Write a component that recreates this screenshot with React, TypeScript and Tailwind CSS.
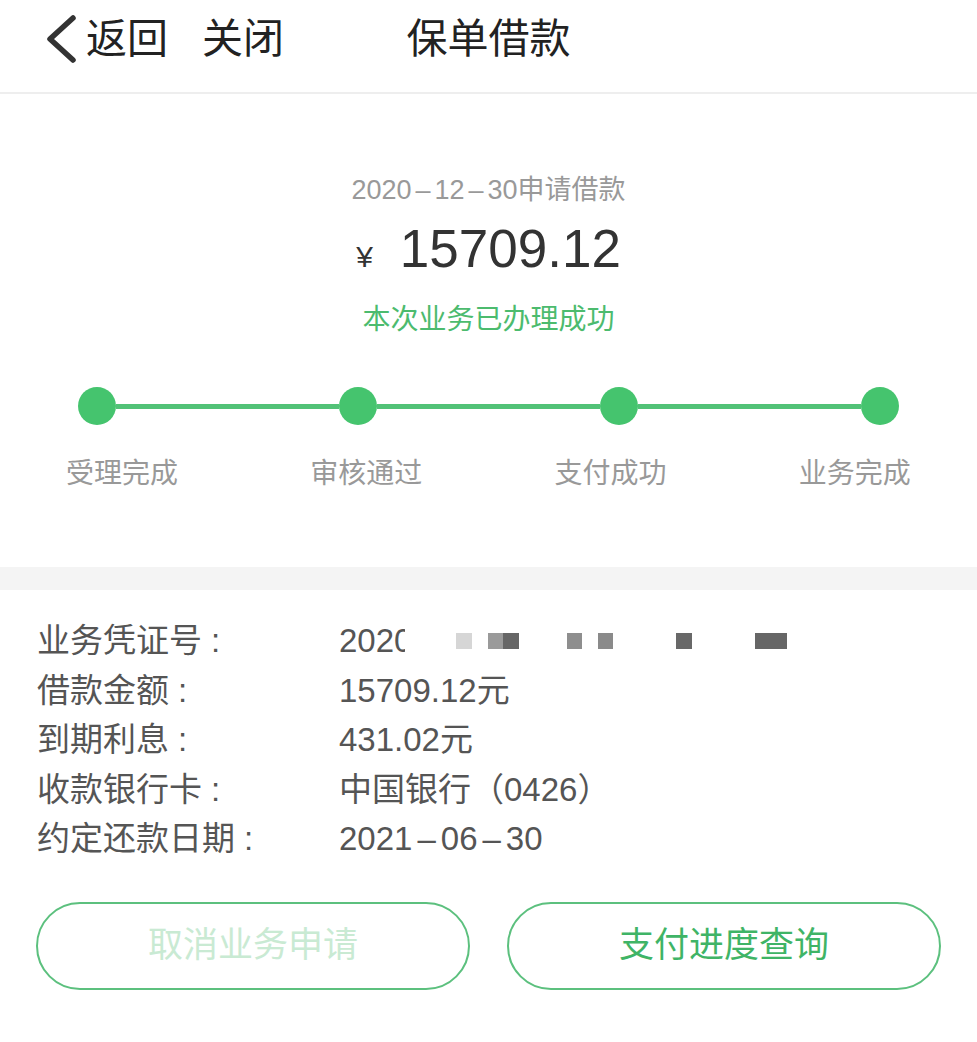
import React from "react";

const font = { fontFamily: '"Liberation Sans", "Noto Sans CJK SC", sans-serif' };

function Dash({ className }: { className: string }) {
  return <span className={className}>–</span>;
}

export default function App() {
  const steps = ["受理完成", "审核通过", "支付成功", "业务完成"];
  const colon = <span className="ml-[9px]">:</span>;
  const rows: [React.ReactNode, React.ReactNode][] = [
    [
      <>业务凭证号{colon}</>,
      <span className="flex items-center">
        <span className="inline-block w-[66px] overflow-hidden whitespace-nowrap">2020</span>
        <span className="ml-[51px] inline-block h-[16px] w-[16px] bg-[#d6d6d6]" />
        <span className="ml-[16px] inline-block h-[16px] w-[15px] bg-[#9a9a9a]" />
        <span className="inline-block h-[16px] w-[16px] bg-[#666666]" />
        <span className="ml-[48px] inline-block h-[16px] w-[15px] bg-[#8e8e8e]" />
        <span className="ml-[16px] inline-block h-[16px] w-[15px] bg-[#8a8a8a]" />
        <span className="ml-[63px] inline-block h-[16px] w-[16px] bg-[#686868]" />
        <span className="ml-[63px] inline-block h-[16px] w-[32px] bg-[#666666]" />
      </span>,
    ],
    [<>借款金额{colon}</>, "15709.12元"],
    [<>到期利息{colon}</>, "431.02元"],
    [<>收款银行卡{colon}</>, "中国银行（0426）"],
    [
      <>约定还款日期{colon}</>,
      <>
        2021<Dash className="mx-[5px]" />06<Dash className="mx-[5px]" />30
      </>,
    ],
  ];
  return (
    <div className="min-h-screen w-[977px] bg-white" style={font}>
      <header className="grid h-[94px] grid-cols-[1fr_auto_1fr] items-center border-b-2 border-[#eeeeee] pb-[14px] text-[41px] leading-[48px] text-[#222]">
        <div className="flex items-center">
          <svg className="ml-[44px]" width="34" height="50" viewBox="0 0 34 50">
            <path d="M29 4 L6 25 L29 46" fill="none" stroke="#333" strokeWidth="5.5" strokeLinecap="round" strokeLinejoin="round" />
          </svg>
          <span className="ml-[8px]">返回</span>
          <span className="ml-[34px]">关闭</span>
        </div>
        <div>保单借款</div>
        <div />
      </header>

      <section className="flex flex-col items-center pt-[76px]">
        <div className="text-[27px] leading-[40px] text-[#999]">
          2020<Dash className="mx-[4px]" />12<Dash className="mx-[4px]" />30申请借款
        </div>
        <div className="mt-[6px] flex items-baseline text-[#333]">
          <span className="text-[30px]">¥</span>
          <span className="ml-[27px] text-[53px] leading-[66px]">15709.12</span>
        </div>
        <div className="mt-[18px] text-[28px] leading-[40px] text-[#4cbb6e]">本次业务已办理成功</div>
      </section>

      <div className="mt-[47px] flex items-center px-[78px]">
        {steps.map((s, i) => (
          <React.Fragment key={s}>
            <div className="h-[38px] w-[38px] shrink-0 rounded-full bg-[#45c46e]" />
            {i < steps.length - 1 && <div className="h-[5px] flex-1 bg-[#52c277]" />}
          </React.Fragment>
        ))}
      </div>
      <div className="mt-[29px] grid grid-cols-4 text-center text-[28px] leading-[40px] text-[#999]">
        {steps.map((s) => (
          <div key={s}>{s}</div>
        ))}
      </div>

      <div className="mt-[73px] h-[23px] bg-[#f4f4f4]" />

      <section className="pt-[26px] pl-[37px] text-[33px] leading-[49.5px] text-[#555]">
        {rows.map(([k, v], i) => (
          <div key={i} className="flex items-center">
            <div className="w-[302px] shrink-0">{k}</div>
            <div>{v}</div>
          </div>
        ))}
      </section>

      <div className="mt-[38px] flex gap-[37px] px-[36px]">
        <button className="flex h-[88px] flex-1 items-center justify-center rounded-full border-2 border-[#5cc07e] text-[35px] text-[#c9ead3]">
          取消业务申请
        </button>
        <button className="flex h-[88px] flex-1 items-center justify-center rounded-full border-2 border-[#5cc07e] text-[35px] text-[#3fb466]">
          支付进度查询
        </button>
      </div>
    </div>
  );
}
